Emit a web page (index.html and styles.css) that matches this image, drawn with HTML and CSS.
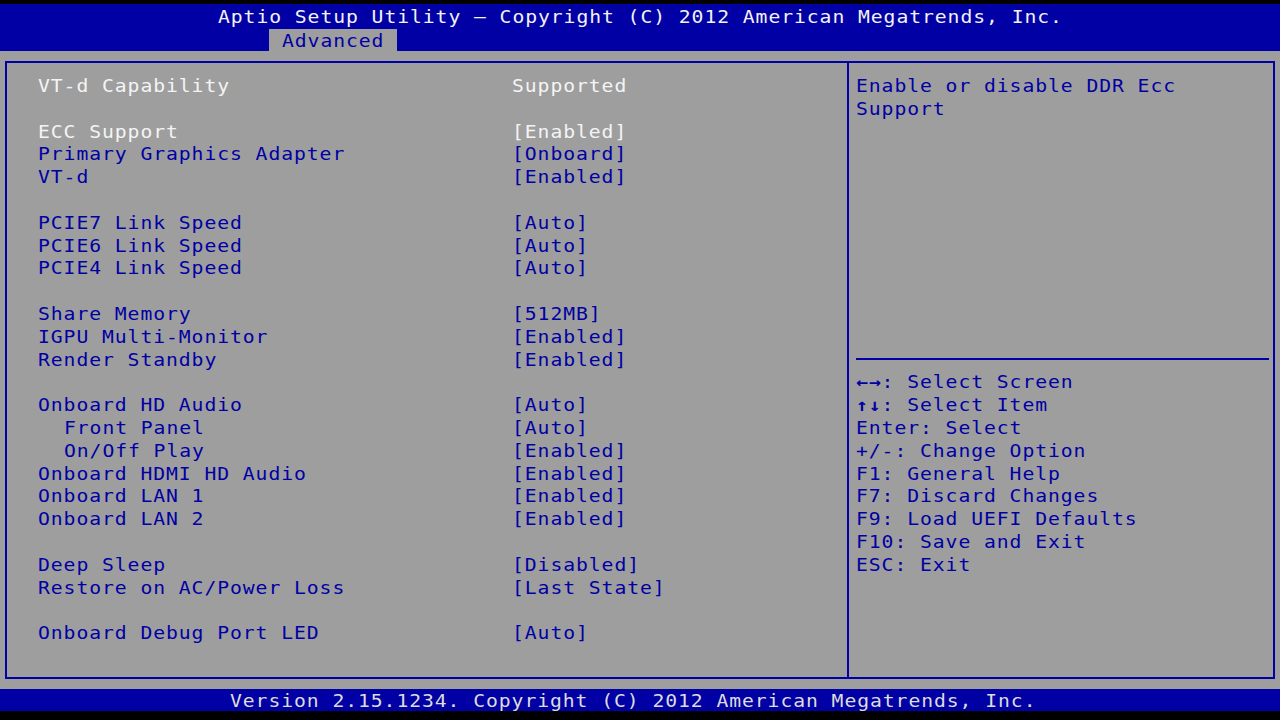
FILE: index.html
```html
<!DOCTYPE html>
<html>
<head>
<meta charset="utf-8">
<link rel="stylesheet" href="styles.css">
</head>
<body>
<div class="screen">
  <header class="header">
    <div class="title"><span class="t">Aptio Setup Utility – Copyright (C) 2012 American Megatrends, Inc.</span></div>
    <div class="tabs"><div class="tab"><span class="t">Advanced</span></div></div>
  </header>
  <main class="main">
    <div class="frame">
      <section class="left">
        <div class="grid">
          <div class="lbl info"><span class="t">VT-d Capability</span></div><div class="val info"><span class="t">Supported</span></div>
          <div class="blank"></div>
          <div class="lbl sel"><span class="t">ECC Support</span></div><div class="val sel"><span class="t">[Enabled]</span></div>
          <div class="lbl"><span class="t">Primary Graphics Adapter</span></div><div class="val"><span class="t">[Onboard]</span></div>
          <div class="lbl"><span class="t">VT-d</span></div><div class="val"><span class="t">[Enabled]</span></div>
          <div class="blank"></div>
          <div class="lbl"><span class="t">PCIE7 Link Speed</span></div><div class="val"><span class="t">[Auto]</span></div>
          <div class="lbl"><span class="t">PCIE6 Link Speed</span></div><div class="val"><span class="t">[Auto]</span></div>
          <div class="lbl"><span class="t">PCIE4 Link Speed</span></div><div class="val"><span class="t">[Auto]</span></div>
          <div class="blank"></div>
          <div class="lbl"><span class="t">Share Memory</span></div><div class="val"><span class="t">[512MB]</span></div>
          <div class="lbl"><span class="t">IGPU Multi-Monitor</span></div><div class="val"><span class="t">[Enabled]</span></div>
          <div class="lbl"><span class="t">Render Standby</span></div><div class="val"><span class="t">[Enabled]</span></div>
          <div class="blank"></div>
          <div class="lbl"><span class="t">Onboard HD Audio</span></div><div class="val"><span class="t">[Auto]</span></div>
          <div class="lbl sub"><span class="t">Front Panel</span></div><div class="val"><span class="t">[Auto]</span></div>
          <div class="lbl sub"><span class="t">On/Off Play</span></div><div class="val"><span class="t">[Enabled]</span></div>
          <div class="lbl"><span class="t">Onboard HDMI HD Audio</span></div><div class="val"><span class="t">[Enabled]</span></div>
          <div class="lbl"><span class="t">Onboard LAN 1</span></div><div class="val"><span class="t">[Enabled]</span></div>
          <div class="lbl"><span class="t">Onboard LAN 2</span></div><div class="val"><span class="t">[Enabled]</span></div>
          <div class="blank"></div>
          <div class="lbl"><span class="t">Deep Sleep</span></div><div class="val"><span class="t">[Disabled]</span></div>
          <div class="lbl"><span class="t">Restore on AC/Power Loss</span></div><div class="val"><span class="t">[Last State]</span></div>
          <div class="blank"></div>
          <div class="lbl"><span class="t">Onboard Debug Port LED</span></div><div class="val"><span class="t">[Auto]</span></div>
        </div>
      </section>
      <aside class="right">
        <div class="help">
          <div class="line"><span class="t">Enable or disable DDR Ecc</span></div>
          <div class="line"><span class="t">Support</span></div>
        </div>
        <div class="sep"></div>
        <div class="keys">
          <div class="line"><span class="t"><b>←→</b>: Select Screen</span></div>
          <div class="line"><span class="t"><b>↑↓</b>: Select Item</span></div>
          <div class="line"><span class="t">Enter: Select</span></div>
          <div class="line"><span class="t">+/-: Change Option</span></div>
          <div class="line"><span class="t">F1: General Help</span></div>
          <div class="line"><span class="t">F7: Discard Changes</span></div>
          <div class="line"><span class="t">F9: Load UEFI Defaults</span></div>
          <div class="line"><span class="t">F10: Save and Exit</span></div>
          <div class="line"><span class="t">ESC: Exit</span></div>
        </div>
      </aside>
    </div>
  </main>
  <footer class="footer"><span class="t">Version 2.15.1234. Copyright (C) 2012 American Megatrends, Inc.</span></footer>
</div>
</body>
</html>
```
FILE: styles.css
```css
* { box-sizing: border-box; }
html, body {
  margin: 0;
  padding: 0;
  background: #000;
}
body {
  width: 1280px;
  height: 720px;
  overflow: hidden;
  font-family: "DejaVu Sans Mono", "Liberation Mono", monospace;
  font-size: 17px;
  letter-spacing: 0.8px;
  white-space: nowrap;
}
/* each text cell is 12.8px wide: (10.236 + 0.8) * 1.16 */
.t {
  display: inline-block;
  transform: scaleX(1.16);
  transform-origin: 0 50%;
}
.screen {
  padding-top: 4px;
  height: 720px;
}
.header {
  background: #0000a4;
  height: 47px;
  display: flex;
  flex-direction: column;
}
.title {
  height: 25px;
  line-height: 27px;
  padding-left: 217.6px;
  color: #f2f2f2;
}
.tabs {
  display: flex;
  padding-left: 268.8px;
}
.tab {
  width: 128px;
  height: 22px;
  line-height: 24px;
  padding-left: 12.8px;
  background: #9e9e9e;
  color: #0000a4;
}
.main {
  background: #9e9e9e;
  height: 638px;
  padding-top: 10px;
  padding-left: 5px;
}
.frame {
  width: 1270px;
  height: 618px;
  border: 2px solid #0000a4;
  display: flex;
}
.left {
  width: 842px;
  border-right: 2px solid #0000a4;
  padding-top: 12px;
  padding-left: 31.4px;
}
.grid {
  display: grid;
  grid-template-columns: 473.6px 1fr;
  grid-auto-rows: 22.8px;
  line-height: 22.8px;
}
.blank { grid-column: 1 / 3; }
.lbl, .val { color: #0000a4; }
.info, .sel { color: #f4f4f4; }
.sub { margin-left: 25.6px; }
.right {
  flex: 1;
  padding-top: 12px;
  padding-left: 6.6px;
  padding-right: 4px;
  color: #0000a4;
  display: flex;
  flex-direction: column;
}
.line {
  height: 22.8px;
  line-height: 22.8px;
}
.help {
  height: 273.6px;
}
.sep {
  height: 22.8px;
  display: flex;
  align-items: center;
  margin-top: -1px;
  margin-bottom: 1px;
}
.sep::before {
  content: "";
  display: block;
  width: 100%;
  border-top: 2px solid #0000a4;
}
.keys b { font-weight: bold; }
.footer {
  background: #0000a4;
  height: 22px;
  line-height: 25px;
  padding-left: 230.4px;
  color: #dcdcdc;
  overflow: hidden;
}
```
